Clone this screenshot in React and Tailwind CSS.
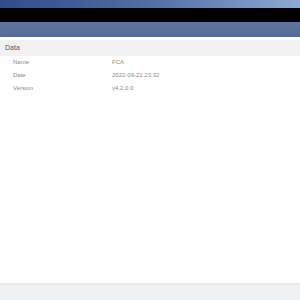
export default function App() {
  const rows = [
    ["Name", "FCA"],
    ["Date", "2022-09-21 23:32"],
    ["Version", "v4.2.0.0"],
  ];
  return (
    <div className="w-[300px] h-[300px] flex flex-col bg-white overflow-hidden" style={{ fontFamily: '"Liberation Sans", Arial, sans-serif' }}>
      <div className="h-[8px] bg-gradient-to-r from-[#2f4d8a] via-[#4f6fa6] to-[#8ea9d3]" />
      <div className="h-[14px] bg-black" />
      <div className="h-[15px] bg-gradient-to-b from-[#5f74a0] to-[#566b95]" />
      <div className="h-[3px] bg-white" />
      <div className="h-[16px] bg-[#f2f2f2] flex items-center pt-[1px] px-[5px] text-[7px] text-[#555]">Data</div>
      <div className="flex flex-col">
        {rows.map(([k, v]) => (
          <div key={k} className="h-[13px] flex items-center text-[6px] text-[#8a8a8a]">
            <div className="w-[112px] pl-[13px]">{k}</div>
            <div>{v}</div>
          </div>
        ))}
      </div>
      <div className="flex-1" />
      <div className="h-[2px] bg-[#e8e9eb]" />
      <div className="h-[15px] bg-[#f0f1f3]" />
    </div>
  );
}
